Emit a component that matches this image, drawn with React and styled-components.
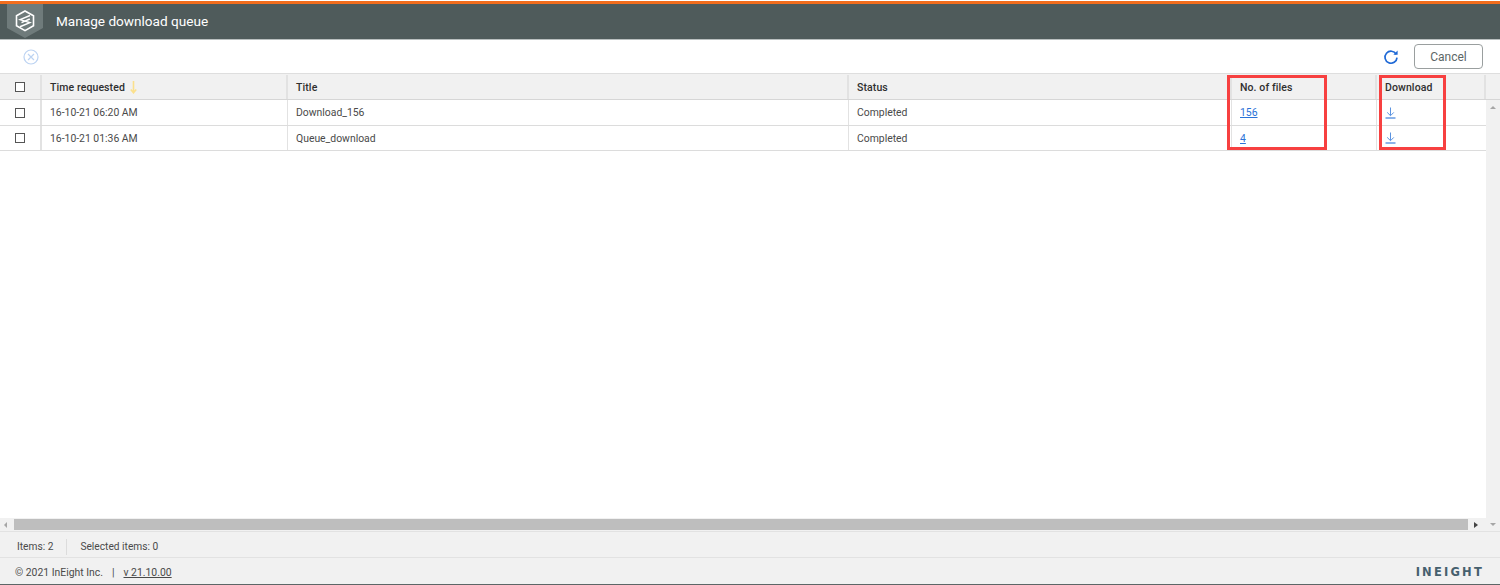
import React from 'react'
import styled, { createGlobalStyle } from 'styled-components'

const GlobalStyle = createGlobalStyle`
  html, body { margin: 0; padding: 0; background: #fff; }
  body { font-family: Roboto, "Liberation Sans", sans-serif; overflow: hidden; }
  * { box-sizing: border-box; }
`

const COLUMNS = '42px 246px 561px 383px 145px 109px 14px'

const rows = [
  { time: '16-10-21 06:20 AM', title: 'Download_156', status: 'Completed', files: '156' },
  { time: '16-10-21 01:36 AM', title: 'Queue_download', status: 'Completed', files: '4' },
]

const LogoMark = () => (
  <svg width="36" height="35" viewBox="0 0 36 35">
    <path d="M0 0H36V24L18 34L0 24Z" fill="#6f7b7b" />
    <path d="M18 7L26.5 11.8V21.8L18 26.6L9.5 21.8V11.8Z" fill="none" stroke="#fff" strokeWidth="1.6" />
    <path d="M23 11.5L13.2 15.6L22.8 18.6L13 22.8M22.8 15L14.5 18.6" fill="none" stroke="#fff" strokeWidth="1.5" />
  </svg>
)

const ClearIcon = () => (
  <svg width="16" height="16" viewBox="0 0 16 16" fill="none" stroke="#bcd3f2" strokeWidth="1.2">
    <circle cx="8" cy="8" r="7" />
    <path d="M5 5L11 11M11 5L5 11" />
  </svg>
)

const RefreshIcon = () => (
  <svg width="16" height="16" viewBox="0 0 16 16" fill="none">
    <path d="M13.2 5.2A6 6 0 1 0 14 8.6" stroke="#1f69d6" strokeWidth="1.7" />
    <path d="M10.4 5.8H14.6V1.6Z" fill="#1f69d6" />
  </svg>
)

const DownloadIcon = () => (
  <svg width="11" height="12" viewBox="0 0 11 12" fill="none" stroke="#5b93e0" strokeWidth="1">
    <path d="M5.5 0.5V8.5M2.2 5.4L5.5 8.7L8.8 5.4" />
    <path d="M0.5 11H10.5" strokeWidth="1.4" />
  </svg>
)

const SortArrow = () => (
  <svg width="7" height="13" viewBox="0 0 7 13" fill="none" stroke="#fbe08c" strokeWidth="1.6">
    <path d="M3.5 0V11.5M0.8 8.6L3.5 11.8L6.2 8.6" />
  </svg>
)

export default function App() {
  return (
    <Page>
      <GlobalStyle />
      <Header>
        <LogoSlot><LogoMark /></LogoSlot>
        <HeaderTitle>Manage download queue</HeaderTitle>
      </Header>

      <Toolbar>
        <ClearSlot><ClearIcon /></ClearSlot>
        <ToolbarRight>
          <RefreshIcon />
          <CancelButton>Cancel</CancelButton>
        </ToolbarRight>
      </Toolbar>

      <Grid>
        <HeadRow>
          <HeadCell $center><CheckBox /></HeadCell>
          <HeadCell>Time requested<SortSlot><SortArrow /></SortSlot></HeadCell>
          <HeadCell>Title</HeadCell>
          <HeadCell>Status</HeadCell>
          <HeadCell>No. of files</HeadCell>
          <HeadCell>Download</HeadCell>
          <HeadCell />
        </HeadRow>

        <GridBody>
          <RowsArea>
            {rows.map((r) => (
              <DataRow key={r.title}>
                <CheckCell><CheckBox /></CheckCell>
                <Cell $divided>{r.time}</Cell>
                <Cell $divided>{r.title}</Cell>
                <Cell $divided>{r.status}</Cell>
                <Cell $divided><FileLink>{r.files}</FileLink></Cell>
                <Cell><DownloadIcon /></Cell>
              </DataRow>
            ))}
          </RowsArea>
          <VerticalTrack>
            <ArrowUp />
          </VerticalTrack>
        </GridBody>

        <ScrollRow>
          <ArrowLeft />
          <ScrollThumb />
          <ArrowRight />
          <ScrollCorner><ArrowDown /></ScrollCorner>
        </ScrollRow>

        <Highlight $left={1227} $width={100} />
        <Highlight $left={1379} $width={67} />
      </Grid>

      <StatusBar>
        <StatusItem>Items: 2</StatusItem>
        <StatusDivider />
        <StatusItem>Selected items: 0</StatusItem>
      </StatusBar>

      <Footer>
        <FooterLeft>
          <span>© 2021 InEight Inc.</span>
          <FooterSep>|</FooterSep>
          <VersionLink>v 21.10.00</VersionLink>
        </FooterLeft>
        <Brand>INEIGHT</Brand>
      </Footer>
    </Page>
  )
}

const Page = styled.div`
  width: 1500px;
  height: 585px;
  display: flex;
  flex-direction: column;
  border-bottom: 1px solid #5c6666;
  color: #4a4a4a;
`

const Header = styled.header`
  height: 39px;
  margin-top: 1px;
  padding-bottom: 2px;
  flex: none;
  display: flex;
  align-items: center;
  background: #4f5b5b;
  border-top: 3px solid #f26d1d;
  border-bottom: 1px solid #b9bfbf;
`

const LogoSlot = styled.div`
  width: 36px;
  height: 35px;
  margin-left: 7px;
  align-self: flex-start;
`

const HeaderTitle = styled.h1`
  margin: 0 0 0 13px;
  font-size: 13.6px;
  font-weight: 400;
  color: #fff;
`

const Toolbar = styled.div`
  height: 33px;
  flex: none;
  display: flex;
  align-items: center;
  justify-content: space-between;
  background: #fff;
`

const ClearSlot = styled.div`
  display: flex;
  margin-left: 23px;
`

const ToolbarRight = styled.div`
  display: flex;
  align-items: center;
  gap: 15px;
  margin-right: 17px;
`

const CancelButton = styled.button`
  width: 69px;
  height: 25px;
  padding: 0;
  background: #fff;
  border: 1px solid #9a9f9f;
  border-radius: 4px;
  font: 400 12px Roboto, sans-serif;
  color: #5c6666;
`

const Grid = styled.section`
  position: relative;
  flex: 1;
  display: flex;
  flex-direction: column;
  min-height: 0;
`

const HeadRow = styled.div`
  height: 27px;
  padding-top: 1px;
  flex: none;
  display: grid;
  grid-template-columns: ${COLUMNS};
  background: #f1f1f1;
  border-top: 1px solid #dedede;
  border-bottom: 1px solid #d6d6d6;
`

const HeadCell = styled.div`
  display: flex;
  align-items: center;
  justify-content: ${(p) => (p.$center ? 'center' : 'flex-start')};
  padding-left: ${(p) => (p.$center ? '0' : '8px')};
  border-right: 2px solid #e2e2e2;
  font-size: 10.5px;
  font-weight: 500;
  letter-spacing: 0.1px;
  color: #2f2f2f;
  &:last-child { border-right: none; }
`

const SortSlot = styled.span`
  display: flex;
  margin-left: 5px;
`

const GridBody = styled.div`
  flex: 1;
  display: flex;
  min-height: 0;
`

const RowsArea = styled.div`
  width: 1486px;
  flex: none;
  background: #fff;
`

const DataRow = styled.div`
  height: 26px;
  display: grid;
  grid-template-columns: 42px 246px 561px 383px 145px 109px;
  border-bottom: 1px solid #dcdcdc;
  &:last-child { height: 25px; }
`

const Cell = styled.div`
  display: flex;
  align-items: center;
  padding-left: 8px;
  font-size: 10.4px;
  color: #4a4a4a;
  border-right: ${(p) => (p.$divided ? '1px solid #e2e2e2' : 'none')};
`

const CheckCell = styled(Cell)`
  padding-left: 0;
  justify-content: center;
  border-right: 2px solid #e2e2e2;
`

const CheckBox = styled.span`
  display: block;
  width: 10px;
  height: 10px;
  border: 1px solid #555;
  background: #fff;
`

const FileLink = styled.a`
  color: #2b73d8;
  text-decoration: underline;
`

const VerticalTrack = styled.div`
  flex: 1;
  background: #f1f1f1;
  display: flex;
  justify-content: center;
  padding-top: 6px;
`

const ArrowUp = styled.span`
  width: 0;
  height: 0;
  border-left: 3px solid transparent;
  border-right: 3px solid transparent;
  border-bottom: 3px solid #a6a6a6;
`

const ScrollRow = styled.div`
  height: 13px;
  flex: none;
  display: flex;
  align-items: center;
  background: #f1f1f1;
`

const ArrowLeft = styled.span`
  width: 0;
  height: 0;
  margin: 0 7px 0 4px;
  border-top: 3px solid transparent;
  border-bottom: 3px solid transparent;
  border-right: 3px solid #a6a6a6;
`

const ScrollThumb = styled.div`
  width: 1455px;
  height: 11px;
  background: #bebebe;
`

const ArrowRight = styled.span`
  width: 0;
  height: 0;
  margin-left: 6px;
  border-top: 3px solid transparent;
  border-bottom: 3px solid transparent;
  border-left: 4px solid #444;
`

const ScrollCorner = styled.div`
  margin-left: 8px;
  width: 14px;
  display: flex;
  justify-content: center;
`

const ArrowDown = styled.span`
  width: 0;
  height: 0;
  border-left: 3px solid transparent;
  border-right: 3px solid transparent;
  border-top: 3px solid #a6a6a6;
`

const Highlight = styled.div`
  position: absolute;
  top: 2px;
  left: ${(p) => p.$left}px;
  width: ${(p) => p.$width}px;
  height: 75px;
  border: 3px solid #f74040;
  pointer-events: none;
`

const StatusBar = styled.div`
  height: 27px;
  padding-top: 4px;
  flex: none;
  display: flex;
  align-items: center;
  background: #f1f1f1;
  border-top: 1px solid #e2e2e2;
  border-bottom: 1px solid #e2e2e2;
  font-size: 10.2px;
  color: #4a4a4a;
`

const StatusItem = styled.span`
  &:first-child { margin-left: 17px; }
`

const StatusDivider = styled.span`
  width: 1px;
  height: 16px;
  margin: 0 13px;
  background: #dcdcdc;
`

const Footer = styled.footer`
  height: 26px;
  padding: 2px 16px 0 15px;
  flex: none;
  display: flex;
  align-items: center;
  justify-content: space-between;
  background: #f1f1f1;
  font-size: 10.4px;
  color: #4a4a4a;
`

const FooterLeft = styled.div`
  display: flex;
  align-items: center;
`

const FooterSep = styled.span`
  margin: 0 9px;
`

const VersionLink = styled.a`
  text-decoration: underline;
`

const Brand = styled.span`
  font: 700 11.5px "DejaVu Sans", sans-serif;
  letter-spacing: 2.2px;
  color: #46606e;
`
